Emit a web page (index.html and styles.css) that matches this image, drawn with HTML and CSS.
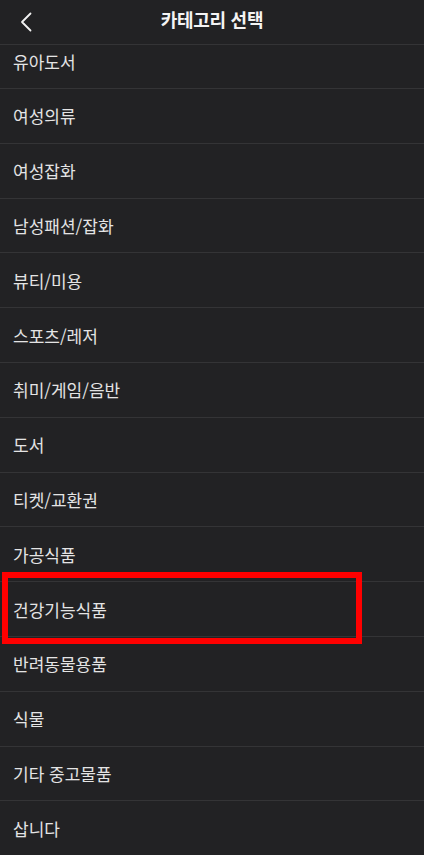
FILE: index.html
```html
<!DOCTYPE html>
<html lang="ko">
<head>
    <meta charset="UTF-8">
    <meta name="viewport" content="width=device-width, initial-scale=1.0">
    <title>카테고리 선택</title>
    <link rel="stylesheet" href="styles.css">
</head>
<body>
    <div class="header">
        <a href="#" class="back-btn">
            <svg width="14" height="20" viewBox="0 0 14 20">
                <polyline points="11.5,1.5 3,10 11.5,18.5" fill="none" stroke="#f2f2f2" stroke-width="1.8" stroke-linecap="round" stroke-linejoin="round"/>
            </svg>
        </a>
        <h1 class="title">카테고리 선택</h1>
    </div>
    <div class="scroll">
        <ul class="category-list">
            <li class="category-item">유아도서</li>
            <li class="category-item">여성의류</li>
            <li class="category-item">여성잡화</li>
            <li class="category-item">남성패션/잡화</li>
            <li class="category-item">뷰티/미용</li>
            <li class="category-item">스포츠/레저</li>
            <li class="category-item">취미/게임/음반</li>
            <li class="category-item">도서</li>
            <li class="category-item">티켓/교환권</li>
            <li class="category-item">가공식품</li>
            <li class="category-item marked">건강기능식품</li>
            <li class="category-item">반려동물용품</li>
            <li class="category-item">식물</li>
            <li class="category-item">기타 중고물품</li>
            <li class="category-item">삽니다</li>
        </ul>
    </div>
</body>
</html>
```

FILE: styles.css
```css
* {
    margin: 0;
    padding: 0;
    box-sizing: border-box;
    font-family: "Noto Sans CJK KR", "Noto Sans", sans-serif;
}
body {
    background: #222224;
    color: #e4e4e4;
    height: 100vh;
    display: flex;
    flex-direction: column;
    overflow: hidden;
}
.header {
    height: 45px;
    border-bottom: 1px solid #343436;
    display: flex;
    align-items: center;
    justify-content: center;
    position: relative;
    flex-shrink: 0;
}
.back-btn {
    position: absolute;
    left: 19px;
    top: 12px;
    display: block;
    line-height: 0;
}
.title {
    font-size: 18px;
    font-weight: 700;
    color: #f4f4f4;
    margin-top: -7px;
    letter-spacing: -0.3px;
}
.scroll {
    flex: 1;
    overflow: hidden;
}
.category-list {
    list-style: none;
    margin-top: -10.8px;
}
.category-item {
    height: 54.8px;
    border-bottom: 1px solid #343436;
    display: flex;
    align-items: center;
    padding-left: 13px;
    font-size: 17px;
    position: relative;
}
.category-item.marked::after {
    content: "";
    box-sizing: border-box;
    position: absolute;
    left: 2px;
    top: -10px;
    width: 360px;
    height: 72px;
    border: 6px solid #ff0000;
}
```
